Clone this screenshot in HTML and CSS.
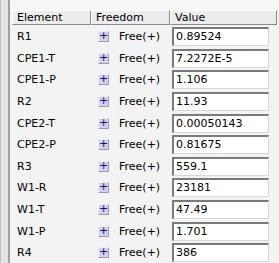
FILE: index.html
```html
<!DOCTYPE html>
<html>
<head>
<meta charset="utf-8">
<link rel="stylesheet" href="styles.css">
</head>
<body>
<div class="frame">
  <div class="edge"></div>
  <div class="panel">
    <div class="topgap"></div>
    <div class="grid">
      <div class="hdr c1">Element</div>
      <div class="hdr c2">Freedom</div>
      <div class="hdr c3">Value</div>
    </div>
    <div class="rows">
      <div class="row"><span class="name">R1</span><span class="free"><span class="plus">+</span>Free(+)</span><span class="val"><span class="box">0.89524</span></span></div>
      <div class="row"><span class="name">CPE1-T</span><span class="free"><span class="plus">+</span>Free(+)</span><span class="val"><span class="box">7.2272E-5</span></span></div>
      <div class="row"><span class="name">CPE1-P</span><span class="free"><span class="plus">+</span>Free(+)</span><span class="val"><span class="box">1.106</span></span></div>
      <div class="row"><span class="name">R2</span><span class="free"><span class="plus">+</span>Free(+)</span><span class="val"><span class="box">11.93</span></span></div>
      <div class="row"><span class="name">CPE2-T</span><span class="free"><span class="plus">+</span>Free(+)</span><span class="val"><span class="box">0.00050143</span></span></div>
      <div class="row"><span class="name">CPE2-P</span><span class="free"><span class="plus">+</span>Free(+)</span><span class="val"><span class="box">0.81675</span></span></div>
      <div class="row"><span class="name">R3</span><span class="free"><span class="plus">+</span>Free(+)</span><span class="val"><span class="box">559.1</span></span></div>
      <div class="row"><span class="name">W1-R</span><span class="free"><span class="plus">+</span>Free(+)</span><span class="val"><span class="box">23181</span></span></div>
      <div class="row"><span class="name">W1-T</span><span class="free"><span class="plus">+</span>Free(+)</span><span class="val"><span class="box">47.49</span></span></div>
      <div class="row"><span class="name">W1-P</span><span class="free"><span class="plus">+</span>Free(+)</span><span class="val"><span class="box">1.701</span></span></div>
      <div class="row"><span class="name">R4</span><span class="free"><span class="plus">+</span>Free(+)</span><span class="val"><span class="box">386</span></span></div>
    </div>
  </div>
</div>
</body>
</html>
```
FILE: styles.css
```css
html, body {
  margin: 0;
  padding: 0;
  background: #f0f0f0;
}
body {
  font-family: "DejaVu Sans", Verdana, sans-serif;
  font-size: 11px;
  color: #000;
  width: 279px;
  height: 263px;
  overflow: hidden;
}
.frame {
  display: flex;
  height: 263px;
}
.edge {
  flex: none;
  width: 10px;
  box-sizing: border-box;
  background: #e4e4e4;
  border-left: 1px solid #c0c0c0;
  border-right: 2px solid #a0a0a0;
}
.panel {
  flex: 1;
  background: #f3f3f3;
  display: flex;
  flex-direction: column;
}
.topgap {
  height: 10px;
  flex: none;
  background: #f6f6f6;
}
.grid {
  display: grid;
  grid-template-columns: 79px 79px 107px;
  margin-left: 2px;
  height: 15px;
}
.hdr {
  background: #ececec;
  border-top: 1px solid #fff;
  border-left: 1px solid #fff;
  border-right: 1px solid #8a8a8a;
  border-bottom: 1px solid #8a8a8a;
  padding-left: 4px;
  line-height: 14px;
  white-space: nowrap;
  overflow: hidden;
}
.rows {
  display: flex;
  flex-direction: column;
  margin-left: 2px;
  padding-top: 1px;
}
.row {
  display: grid;
  grid-template-columns: 79px 79px 107px;
  height: 21.6px;
  align-items: center;
}
.name {
  padding-left: 5px;
}
.free {
  display: flex;
  align-items: center;
  padding-left: 7px;
  gap: 10px;
}
.plus {
  width: 11px;
  height: 11px;
  box-sizing: border-box;
  background: #d2d2e8;
  border: 1px solid #ececf6;
  border-right-color: #9a9aba;
  border-bottom-color: #9a9aba;
  color: #10108a;
  font-size: 11px;
  line-height: 8px;
  text-align: center;
}
.val {
  padding-left: 2px;
}
.box {
  display: block;
  width: 97px;
  height: 19px;
  box-sizing: border-box;
  background: #fff;
  border-top: 2px solid #7a7a7a;
  border-left: 2px solid #7a7a7a;
  border-right: 1px solid #d8d8d8;
  border-bottom: 1px solid #d8d8d8;
  padding-left: 2px;
  line-height: 16px;
}
```
